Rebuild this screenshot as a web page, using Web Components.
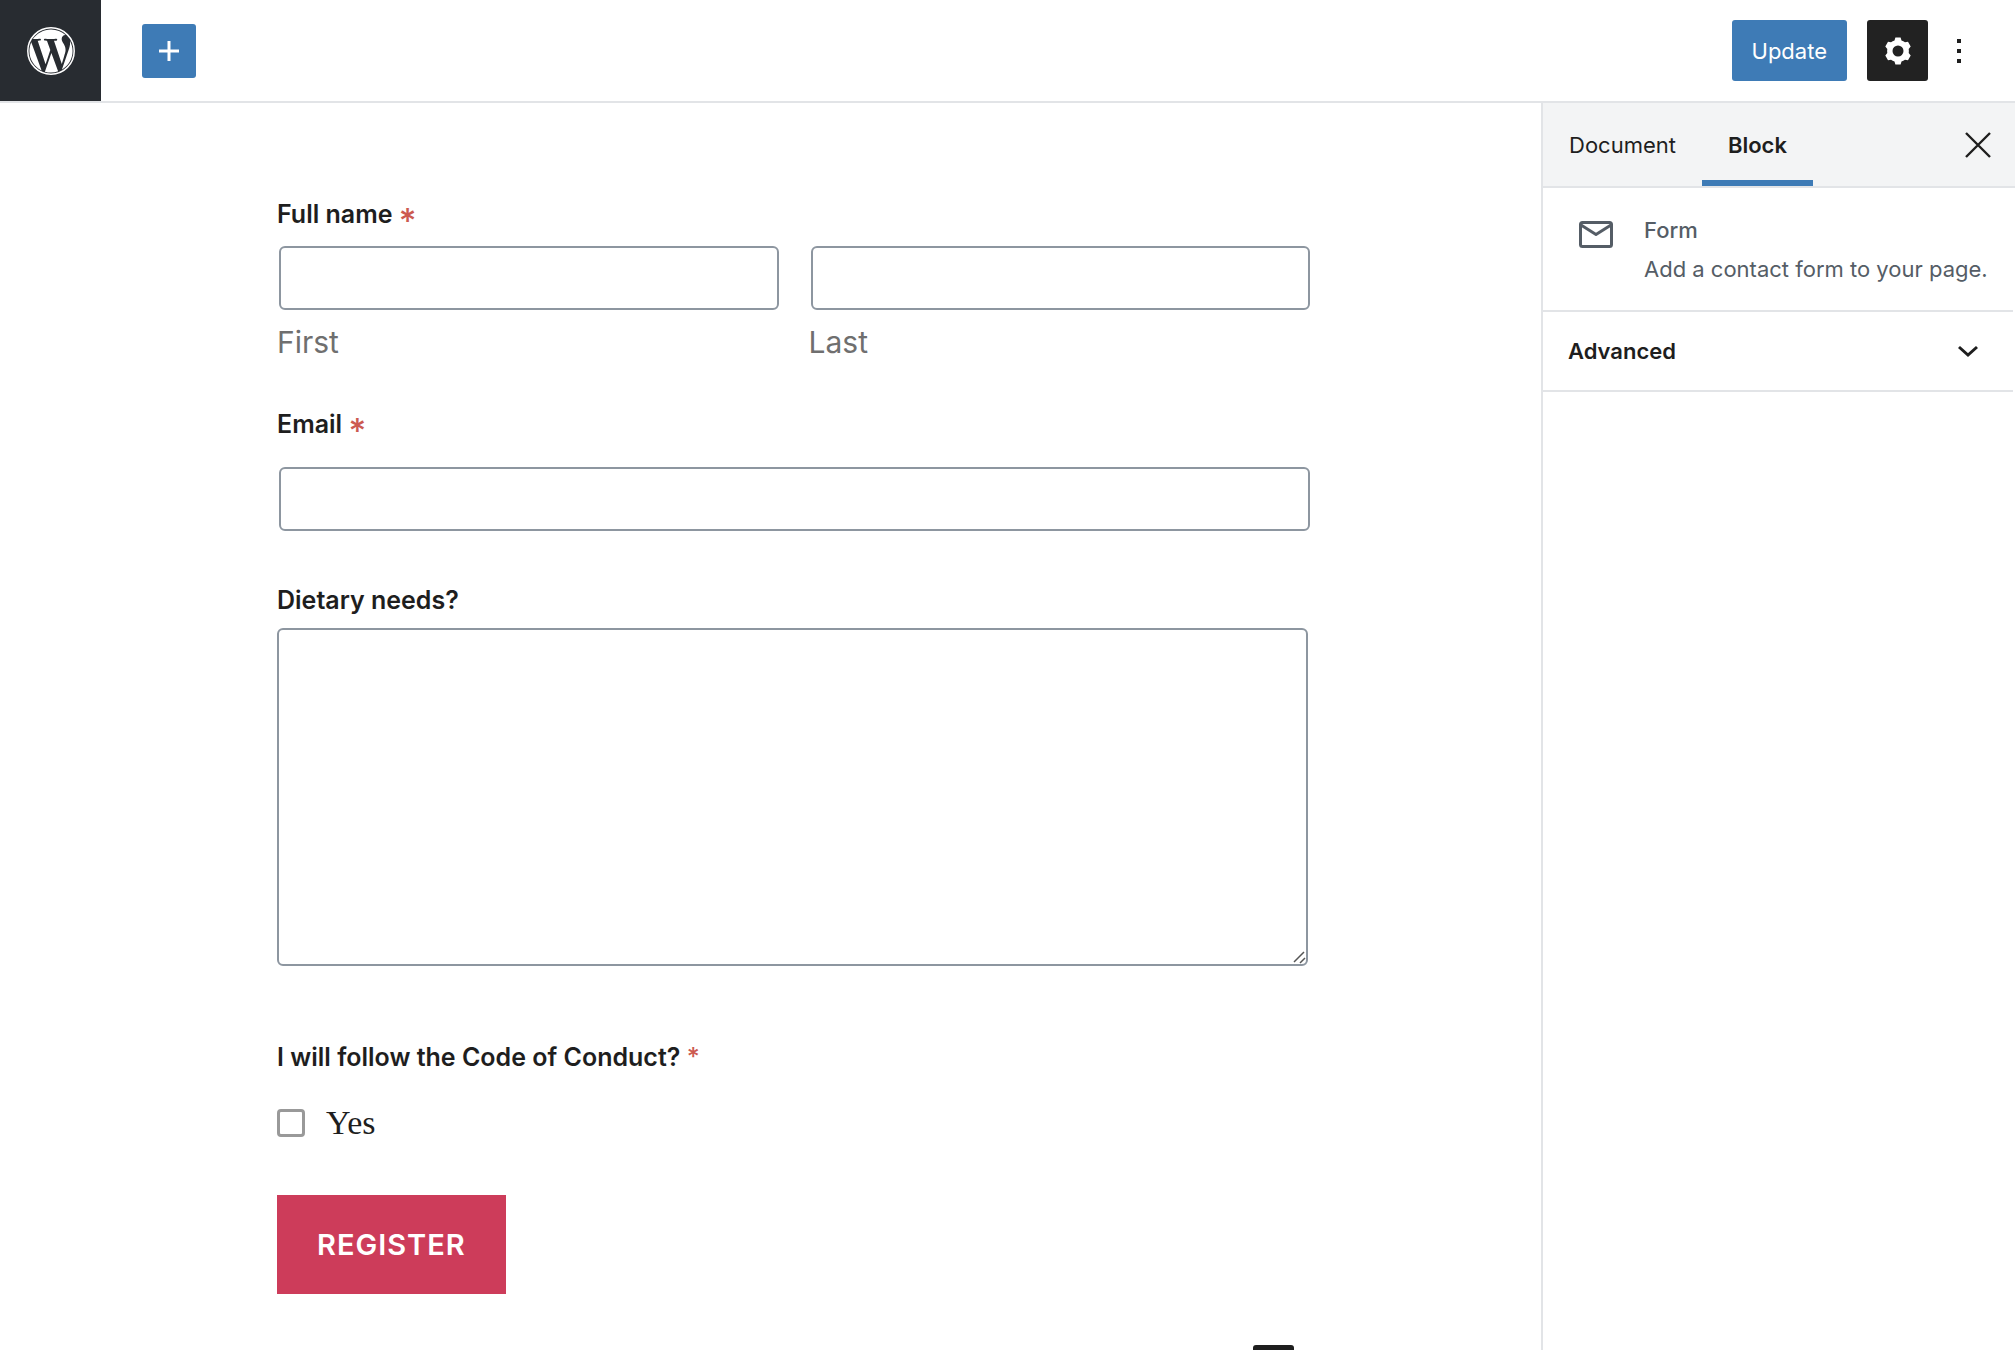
<!DOCTYPE html>
<html lang="en">
<head>
<meta charset="utf-8">
<title>Edit page</title>
<style>
html, body { margin: 0; }
body { font-family: Inter, "Liberation Sans", sans-serif; font-size: 22px; line-height: 32px; color: #1e1e1e; background: #fff; }
</style>
</head>
<body>
<editor-app></editor-app>
<script>
const define = (name, html) => {
  const template = document.createElement('template');
  template.innerHTML = `<style>
    *, *::before, *::after { box-sizing: border-box; }
    button { font: inherit; color: inherit; border: 0; padding: 0; margin: 0; background: none; display: flex; align-items: center; justify-content: center; cursor: pointer; }
    svg { display: block; }
  </style>` + html;
  customElements.define(name, class extends HTMLElement {
    constructor() {
      super();
      this.attachShadow({ mode: 'open' }).append(template.content.cloneNode(true));
    }
  });
};

define('editor-header', `
<style>
  :host { display: flex; align-items: center; height: 103px; border-bottom: 2px solid #e2e4e7; box-sizing: border-box; background: #fff; }
  .home { width: 101px; height: 101px; background: #282c31; display: flex; align-items: center; justify-content: center; }
  .add { width: 54px; height: 54px; margin-left: 41px; background: #3e7bb6; border-radius: 3px; }
  .actions { margin-left: auto; margin-right: 45px; display: flex; align-items: center; gap: 20px; }
  .update { height: 61px; padding: 0 20px; background: #3e7bb6; color: #fff; border-radius: 3px; }
  .settings { width: 61px; height: 61px; background: #222; border-radius: 3px; }
  .more { width: 22px; height: 61px; }
</style>
<a class="home" href="#" aria-label="View posts">
  <svg width="48" height="48" viewBox="0 0 24 24" fill="#fff"><circle cx="12" cy="12" r="11.6" fill="none" stroke="#fff" stroke-width=".75"/><path d="M21.469 6.825c.84 1.537 1.318 3.3 1.318 5.175 0 3.979-2.156 7.456-5.363 9.325l3.295-9.527c.615-1.54.82-2.771.82-3.864 0-.405-.026-.78-.07-1.11m-7.981.105c.647-.03 1.232-.105 1.232-.105.582-.075.514-.93-.067-.899 0 0-1.755.135-2.88.135-1.064 0-2.85-.15-2.85-.15-.585-.03-.661.855-.075.885 0 0 .54.061 1.125.09l1.68 4.605-2.37 7.08L5.354 6.9c.649-.03 1.234-.1 1.234-.1.585-.075.516-.93-.065-.896 0 0-1.746.138-2.874.138-.2 0-.438-.008-.69-.015C4.911 3.15 8.235 1.215 12 1.215c2.809 0 5.365 1.072 7.286 2.833-.046-.003-.091-.009-.141-.009-1.06 0-1.812.923-1.812 1.914 0 .89.513 1.643 1.06 2.531.411.72.89 1.643.89 2.977 0 .915-.354 1.994-.821 3.479l-1.075 3.585-3.9-11.61zM12 22.784c-1.059 0-2.081-.153-3.048-.437l3.237-9.406 3.315 9.087c.024.053.05.101.078.149-1.12.393-2.325.609-3.582.609M1.211 12c0-1.564.336-3.05.935-4.39L7.29 21.709C3.694 19.96 1.212 16.271 1.211 12"/></svg>
</a>
<button class="add" aria-label="Add block"><svg width="22" height="22" viewBox="0 0 22 22" stroke="#fff" stroke-width="3"><path d="M11 1v20M1 11h20"/></svg></button>
<div class="actions">
  <button class="update">Update</button>
  <button class="settings" aria-label="Settings"><svg width="26" height="28" viewBox="-13 -14 26 28" fill="#fff"><path fill-rule="evenodd" d="M-2.600-13.500H2.600L3.500-10.400A11 11 0 0 1 7-8.700L10-9.300 12.700-4.600 10.700-2A11 11 0 0 1 10.700 2L12.700 4.600 10 9.300 7 8.700A11 11 0 0 1 3.500 10.400L2.600 13.500H-2.600L-3.500 10.400A11 11 0 0 1-7 8.700L-10 9.300-12.700 4.600-10.700 2A11 11 0 0 1-10.700-2L-12.700-4.600-10-9.300-7-8.700A11 11 0 0 1-3.500-10.400ZM0-5.500A5.500 5.500 0 1 0 0 5.500 5.500 5.500 0 1 0 0-5.500Z"/></svg></button>
  <button class="more" aria-label="More tools"><svg width="4" height="24" viewBox="0 0 4 24" fill="#1e1e1e"><path d="M0 0h4v4H0zM0 10h4v4H0zM0 20h4v4H0z"/></svg></button>
</div>`);

define('field-label', `
<style>
  :host { display: block; font-size: 25px; font-weight: 600; line-height: 32px; color: #1e1e1e; }
</style>
<slot></slot>`);

define('form-canvas', `
<style>
  :host { display: block; flex: 1; min-width: 0; position: relative; overflow: hidden; padding: 95px 233px 55px 277px; box-sizing: border-box; }
  form { display: flex; flex-direction: column; }
  input:not([type=checkbox]), textarea { display: block; width: 100%; margin: 0; padding: 0 16px; border: 2px solid #8d96a0; border-radius: 6px; background: #fff; font: inherit; font-size: 28px; color: inherit; }
  input:not([type=checkbox]) { height: 64px; }
  textarea { height: 338px; padding: 16px; resize: none; }
  fieldset { border: 0; margin: 0; padding: 0; min-width: 0; }
  .star { color: #cc5a50; font-weight: 500; font-size: 25px; }
  .big { font-size: 34px; line-height: 0; vertical-align: -10px; }
  .names { display: flex; gap: 32px; margin: 16px 0 48px; }
  .name { flex: 1; display: flex; flex-direction: column-reverse; gap: 14px; }
  .name label { font-size: 30px; line-height: 36px; color: #6f6f6f; }
  .name input, .email input { margin-left: 2px; }
  .email { margin: 27px 0 53px; }
  .diet { margin: 12px 0 75px; position: relative; }
  .grip { position: absolute; right: 1px; bottom: 2px; pointer-events: none; }
  .consent { display: flex; align-items: center; gap: 21px; margin: 30px 0 52px; height: 40px; }
  .consent input { appearance: none; width: 28px; height: 28px; margin: 0; border: 3px solid #999; border-radius: 4px; background: #fff; }
  .consent label { font-family: "Liberation Serif", serif; font-size: 34px; line-height: 40px; }
  .submit { align-self: flex-start; height: 99px; padding: 0 40px; background: #cd3c5a; color: #fff; font-size: 29px; font-weight: 600; letter-spacing: 1px; }
  .inserter { position: absolute; right: 247px; bottom: -36px; width: 41px; height: 41px; background: #1e1e1e; border-radius: 3px; }
</style>
<form>
  <fieldset>
    <field-label>Full name <span class="star big">*</span></field-label>
    <div class="names">
      <div class="name"><label for="first">First</label><input id="first" type="text"></div>
      <div class="name"><label for="last">Last</label><input id="last" type="text"></div>
    </div>
  </fieldset>
  <label for="email"><field-label>Email <span class="star big">*</span></field-label></label>
  <div class="email"><input id="email" type="email"></div>
  <label for="diet"><field-label>Dietary needs?</field-label></label>
  <div class="diet"><textarea id="diet"></textarea><svg class="grip" width="14" height="13" viewBox="0 0 14 13" stroke="#555" stroke-width="1.500"><path d="M1 11L11 1M7 12l5-5"/></svg></div>
  <fieldset>
    <field-label>I will follow the Code of Conduct? <span class="star">*</span></field-label>
    <div class="consent"><input id="yes" type="checkbox"><label for="yes">Yes</label></div>
  </fieldset>
  <button class="submit" type="button">REGISTER</button>
</form>
<button class="inserter" aria-label="Add block"></button>`);

define('block-sidebar', `
<style>
  :host { display: block; width: 474px; flex: none; border-left: 2px solid #e2e4e7; box-sizing: border-box; background: #fff; }
  .tabs { display: flex; height: 85px; background: #f3f4f5; border-bottom: 2px solid #e2e4e7; }
  .tabs button { padding: 0 26px; border-bottom: 6px solid transparent; border-top: 6px solid transparent; }
  .tabs .active { font-weight: 600; border-bottom-color: #3e7bb6; }
  .tabs .close { margin-left: auto; padding: 0 24px; }
  .card { display: flex; gap: 31px; height: 124px; padding: 23px 0 0 36px; margin-right: 2px; border-bottom: 2px solid #e2e4e7; color: #555d66; }
  .card svg { margin-top: 10px; flex: none; }
  h2, p { margin: 0; font-size: 22px; line-height: 39px; white-space: nowrap; }
  h2 { font-weight: 500; }
  .panel { width: calc(100% - 2px); height: 80px; padding: 0 34px 0 25px; border-bottom: 2px solid #e2e4e7; justify-content: space-between; font-weight: 600; }
</style>
<div class="tabs">
  <button>Document</button><button class="active">Block</button>
  <button class="close" aria-label="Close settings"><svg width="26" height="26" viewBox="0 0 26 26" stroke="#1e1e1e" stroke-width="2.400"><path d="M1 1l24 24M25 1L1 25"/></svg></button>
</div>
<div class="card">
  <svg width="34" height="27" viewBox="0 0 34 27" fill="none" stroke="#555d66" stroke-width="3" stroke-linejoin="round"><rect x="1.500" y="1.500" width="31" height="24" rx="2"/><path d="M2 4l15 9.500L32 4"/></svg>
  <div><h2>Form</h2><p>Add a contact form to your page.</p></div>
</div>
<button class="panel">Advanced<svg width="22" height="13" viewBox="0 0 22 13" fill="none" stroke="#1e1e1e" stroke-width="3"><path d="M2 2l9 8 9-8"/></svg></button>`);

define('editor-app', `
<style>
  :host { display: flex; flex-direction: column; min-height: 100vh; }
  main { flex: 1; display: flex; }
</style>
<editor-header></editor-header>
<main><form-canvas></form-canvas><block-sidebar></block-sidebar></main>`);
</script>
</body>
</html>
